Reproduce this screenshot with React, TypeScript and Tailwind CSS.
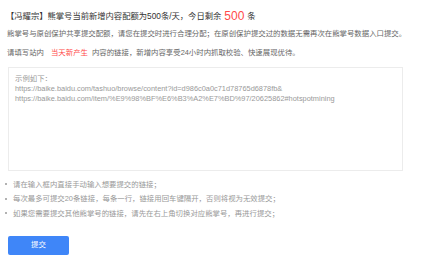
import React from "react";

const F = { fontFamily: '"Liberation Sans", "Noto Sans CJK SC", sans-serif' };

export default function App() {
  const tips = [
    "请在输入框内直接手动输入想要提交的链接；",
    "每次最多可提交20条链接，每条一行，链接用回车键隔开，否则将视为无效提交；",
    "如果您需要提交其他熊掌号的链接，请先在右上角切换对应熊掌号，再进行提交；",
  ];
  return (
    <div className="w-[444px] h-[269px] bg-white flex flex-col" style={F}>
      <div className="pt-[9px] pl-[6px] h-[23px] flex items-center whitespace-nowrap text-[8.3px] leading-[14px] text-[#333]">
        <span>【冯耀宗】熊掌号当前新增内容配额为500条/天，今日剩余</span>
        <span className="text-[#ff4a4a] text-[12px] ml-[3px] mr-[3px]">500</span>
        <span>条</span>
      </div>
      <div className="mt-[5px] pl-[7px] text-[7.4px] leading-[12px] text-[#666] whitespace-nowrap">
        熊掌号与原创保护共享提交配额，请您在提交时进行合理分配；在原创保护提交过的数据无需再次在熊掌号数据入口提交。
      </div>
      <div className="mt-[7px] pl-[7px] text-[7.4px] leading-[12px] text-[#666] whitespace-nowrap">
        <span>请填写站内</span>
        <span className="text-[#ff4a4a] ml-[7px] mr-[4px]">当天新产生</span>
        <span>内容的链接，新增内容享受24小时内抓取校验、快速展现优待。</span>
      </div>
      <div className="mt-[8px] ml-[8px] w-[395px] h-[104px] border border-[#ececec] pt-[6px] pl-[6px] text-[7.4px] leading-[10px] text-[#999] whitespace-nowrap">
        <div>示例如下：</div>
        <div>https://baike.baidu.com/tashuo/browse/content?id=d986c0a0c71d78765d6878fb&amp;</div>
        <div>https://baike.baidu.com/item/%E9%98%BF%E6%B3%A2%E7%BD%97/20625862#hotspotmining</div>
      </div>
      <ul className="mt-[6px] pl-[5px]">
        {tips.map((t) => (
          <li key={t} className="flex items-center h-[14.5px] text-[7.4px] text-[#999] whitespace-nowrap">
            <span className="w-[2px] h-[2px] bg-[#999] rounded-full mr-[6px]" />
            <span>{t}</span>
          </li>
        ))}
      </ul>
      <button className="mt-[15px] ml-[8px] w-[61px] h-[19px] rounded-[2px] bg-[#3f86f8] text-white text-[7.4px] flex items-center justify-center">
        提交
      </button>
    </div>
  );
}
